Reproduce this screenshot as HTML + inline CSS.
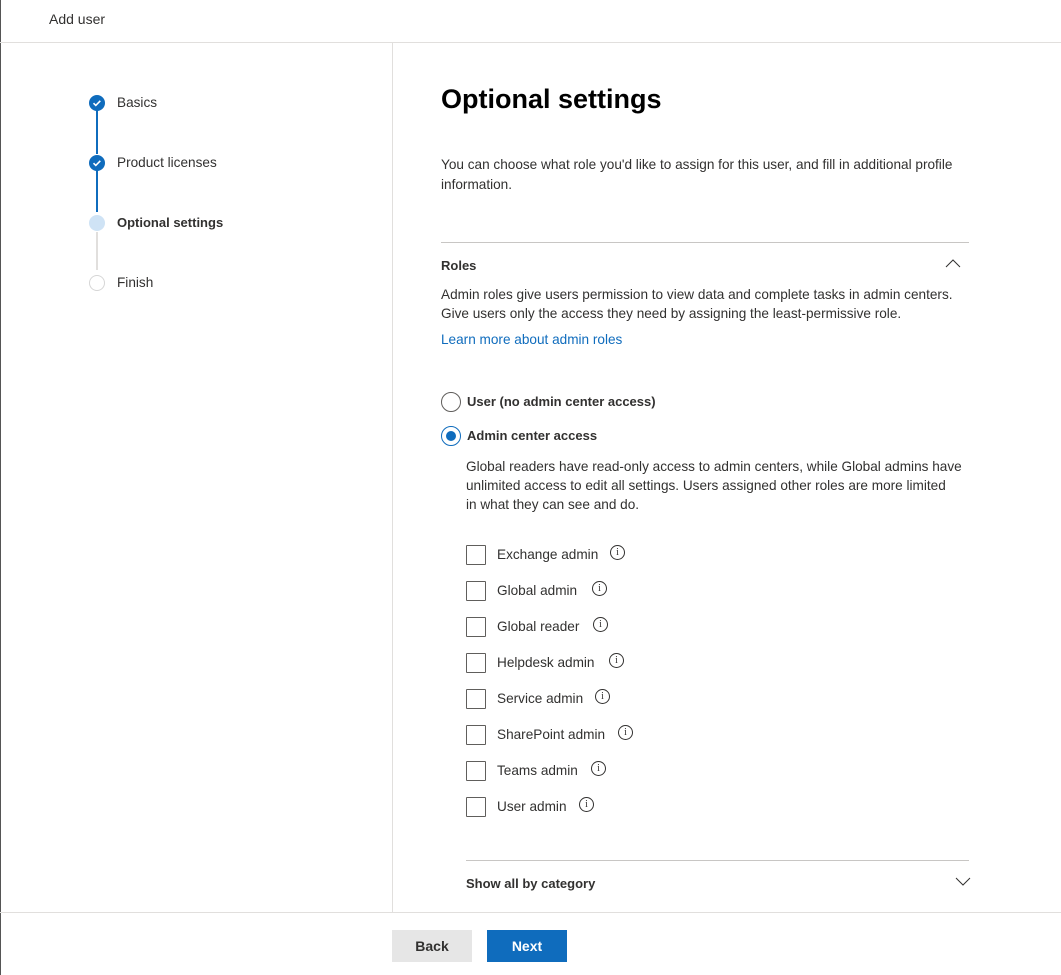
<!DOCTYPE html>
<html><head><meta charset="utf-8"><style>
*{margin:0;padding:0;box-sizing:border-box}
body{width:1061px;height:975px;background:#fff;font-family:"Liberation Sans",sans-serif;color:#323130;font-size:13.6px;position:relative;overflow:hidden}
.a{position:absolute;white-space:nowrap}
.b{font-weight:bold;font-size:13px}
.cb{position:absolute;left:466px;width:20px;height:20px;border:1px solid #605e5c;border-radius:1px}
.info{position:absolute;width:15px;height:15px;border:1px solid #323130;border-radius:50%;font-size:10px;text-align:center;line-height:13px;font-family:"Liberation Serif",serif}
</style></head><body>
<div class="a" style="left:0;top:0;width:1px;height:975px;background:#555"></div>
<div class="a" style="left:49px;top:11px;font-size:14px">Add user</div>
<div class="a" style="left:0;top:42px;width:1061px;height:1px;background:#e1dfdd"></div>
<div class="a" style="left:392px;top:43px;width:1px;height:869px;background:#e1dfdd"></div>
<div class="a" style="left:96px;top:110px;width:2px;height:44px;background:#0f6cbd"></div>
<div class="a" style="left:96px;top:170px;width:2px;height:42px;background:#0f6cbd"></div>
<div class="a" style="left:96px;top:232px;width:2px;height:38px;background:#e1dfdd"></div>
<svg class="a" style="left:89px;top:95px" width="16" height="16"><circle cx="8" cy="8" r="8" fill="#0f6cbd"/><path d="M4.5 8.2l2.3 2.2 4.5-4.6" stroke="#fff" stroke-width="1.6" fill="none"/></svg>
<svg class="a" style="left:89px;top:155px" width="16" height="16"><circle cx="8" cy="8" r="8" fill="#0f6cbd"/><path d="M4.5 8.2l2.3 2.2 4.5-4.6" stroke="#fff" stroke-width="1.6" fill="none"/></svg>
<div class="a" style="left:89px;top:215px;width:16px;height:16px;border-radius:50%;background:#cfe3f5"></div>
<div class="a" style="left:89px;top:275px;width:16px;height:16px;border-radius:50%;border:1.5px solid #d6d6d6"></div>
<div class="a" style="left:117px;top:95px">Basics</div>
<div class="a" style="left:117px;top:155px">Product licenses</div>
<div class="a b" style="left:117px;top:215px">Optional settings</div>
<div class="a" style="left:117px;top:275px">Finish</div>
<div class="a" style="left:441px;top:84px;font-size:27px;font-weight:bold;color:#000">Optional settings</div>
<div class="a" style="left:441px;top:155px;line-height:20px">You can choose what role you'd like to assign for this user, and fill in additional profile<br>information.</div>
<div class="a" style="left:441px;top:242px;width:528px;height:1px;background:#c8c6c4"></div>
<div class="a b" style="left:441px;top:258px">Roles</div>
<svg class="a" style="left:945px;top:258px" width="16" height="10"><path d="M1 9l7-7 7 7" stroke="#323130" fill="none"/></svg>
<div class="a" style="left:441px;top:285px;line-height:19px">Admin roles give users permission to view data and complete tasks in admin centers.<br>Give users only the access they need by assigning the least-permissive role.</div>
<div class="a" style="left:441px;top:332px;color:#0f6cbd">Learn more about admin roles</div>
<div class="a" style="left:441px;top:392px;width:20px;height:20px;border-radius:50%;border:1px solid #605e5c"></div>
<div class="a b" style="left:467px;top:394px">User (no admin center access)</div>
<div class="a" style="left:441px;top:426px;width:20px;height:20px;border-radius:50%;border:1px solid #0f6cbd"></div>
<div class="a" style="left:446px;top:431px;width:10px;height:10px;border-radius:50%;background:#0f6cbd"></div>
<div class="a b" style="left:467px;top:428px">Admin center access</div>
<div class="a" style="left:466px;top:457px;line-height:19px">Global readers have read-only access to admin centers, while Global admins have<br>unlimited access to edit all settings. Users assigned other roles are more limited<br>in what they can see and do.</div>
<div class="cb" style="top:545px"></div><div class="a" style="left:497px;top:547px">Exchange admin</div><div class="info" style="left:610px;top:545px">i</div>
<div class="cb" style="top:581px"></div><div class="a" style="left:497px;top:583px">Global admin</div><div class="info" style="left:592px;top:581px">i</div>
<div class="cb" style="top:617px"></div><div class="a" style="left:497px;top:619px">Global reader</div><div class="info" style="left:593px;top:617px">i</div>
<div class="cb" style="top:653px"></div><div class="a" style="left:497px;top:655px">Helpdesk admin</div><div class="info" style="left:609px;top:653px">i</div>
<div class="cb" style="top:689px"></div><div class="a" style="left:497px;top:691px">Service admin</div><div class="info" style="left:595px;top:689px">i</div>
<div class="cb" style="top:725px"></div><div class="a" style="left:497px;top:727px">SharePoint admin</div><div class="info" style="left:618px;top:725px">i</div>
<div class="cb" style="top:761px"></div><div class="a" style="left:497px;top:763px">Teams admin</div><div class="info" style="left:591px;top:761px">i</div>
<div class="cb" style="top:797px"></div><div class="a" style="left:497px;top:799px">User admin</div><div class="info" style="left:579px;top:797px">i</div>
<div class="a" style="left:466px;top:860px;width:503px;height:1px;background:#c8c6c4"></div>
<div class="a b" style="left:466px;top:876px">Show all by category</div>
<svg class="a" style="left:955px;top:877px" width="16" height="10"><path d="M1 1l7 7 7-7" stroke="#323130" fill="none"/></svg>
<div class="a" style="left:0;top:912px;width:1061px;height:1px;background:#e1dfdd"></div>
<div class="a" style="left:392px;top:930px;width:80px;height:32px;background:#e6e6e6;text-align:center;line-height:32px;font-weight:bold;font-size:14px">Back</div>
<div class="a" style="left:487px;top:930px;width:80px;height:32px;background:#0f6cbd;color:#fff;text-align:center;line-height:32px;font-weight:bold;font-size:14px">Next</div>
</body></html>
